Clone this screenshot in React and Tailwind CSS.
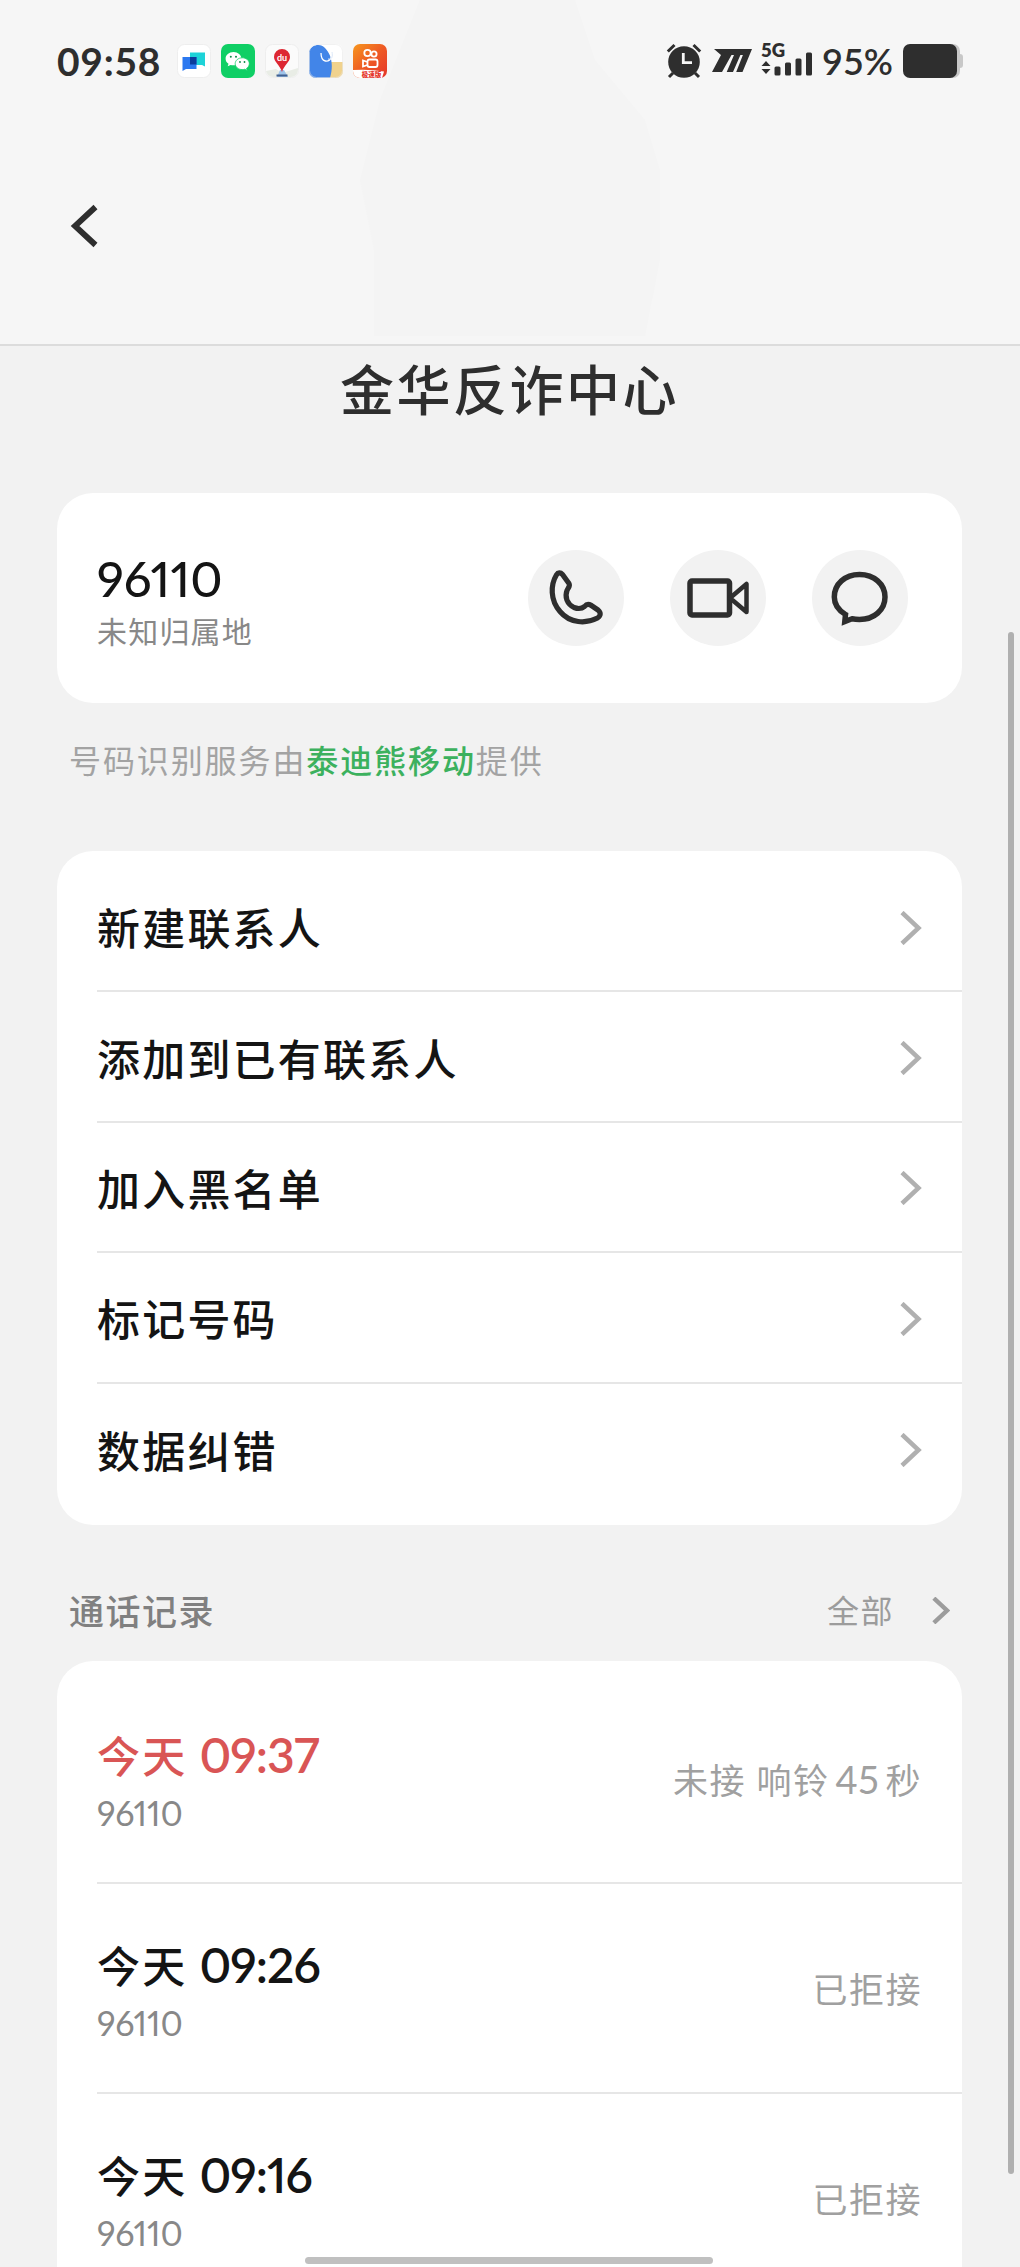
import React from 'react';

const actions = ['新建联系人', '添加到已有联系人', '加入黑名单', '标记号码', '数据纠错'];

const calls = [
  {time: '09:37', number: '96110', missed: true},
  {time: '09:26', number: '96110', missed: false},
  {time: '09:16', number: '96110', missed: false},
];

function Chevron({className, width}) {
  return (
    <svg className={className} viewBox="0 0 22 34" fill="none">
      <path d="M2 1.500 L18.500 17 L2 32.500" stroke="currentColor" strokeWidth={width} />
    </svg>
  );
}

function AppIcons() {
  return (
    <div className="flex gap-[10px]">
      <svg width="34" height="34" viewBox="0 0 34 34">
        <rect x="0.5" y="0.5" width="33" height="33" rx="7" fill="#fff" stroke="#eee" />
        <path d="M13 8.5h15v14l-3-1.500H13z" fill="#1dd3d8" />
        <path d="M5.500 13h14v12H9l-3.500 2z" fill="#2b78f0" />
        <path d="M13 13h6.500v7.500H13z" fill="#0b3c9c" />
      </svg>
      <svg width="34" height="34" viewBox="0 0 34 34">
        <rect width="34" height="34" rx="7" fill="#0fcf65" />
        <path d="M12.500 8C8 8 4.600 11 4.600 14.700c0 2.100 1.100 3.900 2.900 5.100l-.8 2.500 2.900-1.400c.9.300 1.900.4 2.900.4 4.400 0 8-3 8-6.600S16.900 8 12.500 8z" fill="#fff" />
        <path d="M21.300 13.800c-4 0-7.100 2.600-7.100 5.900s3.100 5.900 7.100 5.900c.9 0 1.700-.1 2.500-.4l2.400 1.300-.6-2.200c1.700-1.100 2.700-2.700 2.700-4.600 0-3.300-3.100-5.900-7-5.900z" fill="#fff" stroke="#0fcf65" strokeWidth="0.8" />
        <circle cx="9.800" cy="12.800" r="1" fill="#0a8a45" />
        <circle cx="15" cy="12.800" r="1" fill="#0a8a45" />
        <circle cx="19" cy="18" r="0.900" fill="#0a8a45" />
        <circle cx="23.500" cy="18" r="0.900" fill="#0a8a45" />
      </svg>
      <svg width="34" height="34" viewBox="0 0 34 34">
        <rect x="0.500" y="0.500" width="33" height="33" rx="7" fill="#fbfbfb" stroke="#eee" />
        <path d="M1 27l10-2 6 4 16-5v2a7 7 0 0 1-7 7H8a7 7 0 0 1-7-6z" fill="#e9ede6" />
        <path d="M12 33l3-7h4l4 7z" fill="#9fc4ea" />
        <path d="M17 5a8 8 0 0 0-8 8c0 5 6 8 8 15 2-7 8-10 8-15a8 8 0 0 0-8-8z" fill="#dd2732" />
        <text x="17" y="16.500" textAnchor="middle" fontSize="9" fontWeight="700" fill="#fff" className="font-['Lato']">du</text>
        <rect x="11.500" y="30.500" width="11" height="2" fill="#41608f" />
      </svg>
      <svg width="34" height="34" viewBox="0 0 34 34">
        <clipPath id="tile"><rect width="34" height="34" rx="7" /></clipPath>
        <g clipPath="url(#tile)">
          <rect width="34" height="34" fill="#fff" />
          <path d="M20 18h14v16H18z" fill="#f0d28d" />
          <path d="M0 7C3 0 12-1 16 4c6 6 9 16 5 30H0z" fill="#4285e8" />
          <path d="M12 9c0 10 8 10 10.500 4" fill="none" stroke="#fff" strokeWidth="1.300" />
          <path d="M19 15c4 1 5-3 4-7" fill="none" stroke="#dce8f8" strokeWidth="1" />
        </g>
        <rect x="0.500" y="0.500" width="33" height="33" rx="7" fill="none" stroke="#e8e8e8" strokeOpacity="0.600" />
      </svg>
      <svg width="34" height="34" viewBox="0 0 34 34">
        <defs>
          <linearGradient id="warm" x1="0" y1="0" x2="1" y2="1">
            <stop offset="0" stopColor="#f7971e" />
            <stop offset="0.500" stopColor="#ee5a24" />
            <stop offset="1" stopColor="#e5352b" />
          </linearGradient>
        </defs>
        <rect width="34" height="34" rx="7" fill="url(#warm)" />
        <g fill="none" stroke="#fff" strokeWidth="1.800">
          <circle cx="14.500" cy="9" r="3.200" />
          <circle cx="21" cy="10" r="2.600" />
          <rect x="14.500" y="15.500" width="10" height="7.500" rx="2" />
          <path d="M14.500 18l-4.500-1.500v6l4.500-1.500" />
        </g>
        <path d="M0 26q17-1 31 1.500L29 34H7a7 7 0 0 1-7-7z" fill="#fff" />
        <text x="18.500" y="32.500" textAnchor="middle" fontSize="6.500" fontWeight="900" fill="#e5352b" className="font-['Noto_Sans_CJK_SC']">极速版</text>
      </svg>
    </div>
  );
}

function StatusIcons() {
  return (
    <div className="flex items-center text-[#2e2e2e]">
      <svg width="36" height="36" viewBox="0 0 36 36" fill="none" stroke="currentColor">
        <circle cx="18" cy="19" r="15.800" fill="currentColor" stroke="none" />
        <path d="M1.800 8.500L8.500 2M27.500 2l6.700 6.500" strokeWidth="3" />
        <path d="M7 30l-4 4M29 30l4 4" strokeWidth="3" />
        <path d="M17.300 10v9.700H26" stroke="#f6f6f6" strokeWidth="2.800" />
      </svg>
      <svg className="ml-[10px]" width="40" height="24" viewBox="0 0 40 24" fill="currentColor">
        <path d="M2 0h38l-9.500 23h-6.300l6.700-17h-2.500L21 23h-6.300l7.300-17h-2.500L10 23H0L9 6z" />
      </svg>
      <div className="ml-[9px] flex h-[36px] w-[52px] flex-col justify-between">
        <span className="h-[14px] text-[18.500px] font-extrabold leading-[14px] font-['Lato']">5G</span>
        <svg className="-mt-1 overflow-visible" width="52" height="26" viewBox="0 0 52 26" fill="currentColor">
          <path d="M0.500 13l4.500-5 4.500 5zM0.500 16l4.500 5 4.500-5z" />
          <rect x="13.500" y="13.500" width="6" height="9" rx="1.500" />
          <rect x="24" y="9.500" width="6" height="13" rx="1.500" />
          <rect x="34.500" y="5.500" width="6" height="17" rx="1.500" />
          <rect x="45" y="-0.500" width="6" height="23" rx="1.500" />
        </svg>
      </div>
      <span className="ml-[9px] w-[72px] text-[36px] font-semibold leading-none font-['Lato']">95%</span>
      <svg className="ml-[9px]" width="60" height="34" viewBox="0 0 60 34">
        <rect x="30" y="0" width="27" height="34" rx="7" fill="#c8c8c8" />
        <rect x="54" y="10" width="6" height="14" rx="3" fill="#c8c8c8" />
        <rect width="54" height="34" rx="7" fill="currentColor" />
      </svg>
    </div>
  );
}

function RoundButton({children}) {
  return (
    <button className="flex h-24 w-24 items-center justify-center rounded-full bg-[#f2f2f2] text-[#2e2e2e]">
      {children}
    </button>
  );
}

export default function App() {
  return (
    <div className="relative flex h-[2267px] w-[1020px] flex-col overflow-hidden bg-[#f2f2f2] font-['Lato','Noto_Sans_CJK_SC',sans-serif] text-[#141414]">
      <header className="relative h-[346px] shrink-0 border-b-2 border-[#dcdcdc] bg-[#f6f6f6]">
        <svg className="absolute left-[360px] top-0" width="304" height="336" viewBox="0 0 304 336" fill="#f4f4f4">
          <path d="M60 0h155l20 60 50 60 15 50v90l-15 76H14V250L0 180l20-80z" />
        </svg>
        <div className="relative flex h-[122px] items-center justify-between pl-[57px] pr-[57px]">
          <div className="flex items-center">
            <span className="w-[120px] text-[39px] font-bold leading-none tracking-[0.700px] text-[#2e2e2e]">09:58</span>
            <AppIcons />
          </div>
          <StatusIcons />
        </div>
        <svg className="relative ml-[70px] mt-[81px]" width="30" height="46" viewBox="0 0 30 46" fill="none">
          <path d="M25.500 4L5 23l20.500 19" stroke="#2e2e2e" strokeWidth="5.800" />
        </svg>
      </header>

      <main className="flex flex-col pl-[57px] pr-[58px]">
        <h1 className="mt-[5px] h-[80px] text-center text-[54px] font-medium leading-[80px] tracking-[2.500px] text-[#2e2e2e]">
          金华反诈中心
        </h1>

        <section className="mt-[62px] flex h-[210px] items-center justify-between rounded-[36px] bg-white pl-10 pr-[54px]">
          <div className="pt-[7px]">
            <p className="text-[49px] font-medium leading-[58px] tracking-[0.300px] proportional-nums">96110</p>
            <p className="text-[30px] leading-[48px] tracking-[1.200px] text-[#888]">未知归属地</p>
          </div>
          <div className="flex gap-[46px]">
            <RoundButton>
              <svg width="60" height="60" viewBox="0 0 60 60" fill="none" stroke="currentColor" strokeWidth="5.200" strokeLinejoin="round">
                <path d="M10.500 6.800C12 4.300 14.500 4.300 16.500 6.500L23 15.500C24.500 18 22 20 21 22.500C18.500 29 21 36 28 39.500C32 41 35.500 41 38.500 38.500C40.500 36 43 36 45 37.300L52 42C55 44.500 55 47.500 51.500 50C40 56 24 55.500 14 43.500C4 32 4.500 17 10.500 6.800Z" />
              </svg>
            </RoundButton>
            <RoundButton>
              <svg width="64" height="44" viewBox="0 0 64 44" fill="none" stroke="currentColor" strokeWidth="5.500" strokeLinejoin="round">
                <rect x="4" y="5" width="39.500" height="34" rx="2" />
                <path d="M44 22L60.500 8v28z" strokeWidth="4.500" />
              </svg>
            </RoundButton>
            <RoundButton>
              <svg width="60" height="56" viewBox="0 0 60 56" fill="none" stroke="currentColor" strokeWidth="5.500">
                <path d="M15.500 44.500C8 40 4.300 34 4.300 27C4.300 14 15 4.500 29.500 4.500S55 14 55 27S44 49.500 29.500 49.500C26.500 49.500 24.500 49.300 22 48.800L14.800 51.500Z" />
              </svg>
            </RoundButton>
          </div>
        </section>

        <p className="mt-[32px] h-[52px] pl-3 text-[32px] leading-[52px] tracking-[1.900px] text-[#a3a3a3]">
          号码识别服务由<span className="font-medium text-[#3cb15e]">泰迪熊移动</span>提供
        </p>

        <section className="mt-[64px] h-[674px] rounded-[36px] bg-white pl-10 pt-[11px]">
          {actions.map(action => (
            <div
              key={action}
              className="flex h-[130.400px] items-center justify-between border-b-2 border-[#e6e6e6] pr-[40px] last:border-b-0"
            >
              <span className="pt-[5px] text-[43px] font-medium leading-none tracking-[2.200px]">{action}</span>
              <Chevron className="mt-[3px] h-[34px] w-[22px] text-[#b0b0b0]" width={4.5} />
            </div>
          ))}
        </section>

        <div className="mt-[60px] flex h-[52px] items-center justify-between pl-3 pr-[12px]">
          <h2 className="text-[35px] font-medium leading-[52px] tracking-[1.500px] text-[#808080]">通话记录</h2>
          <div className="flex items-center text-[#9c9c9c]">
            <span className="mr-[38px] text-[32px] leading-[52px] tracking-[1.500px]">全部</span>
            <Chevron className="-mt-[2px] h-[27px] w-[18px]" width={5.5} />
          </div>
        </div>

        <section className="mt-[24px] h-[700px] shrink-0 rounded-t-[36px] bg-white pl-10 pt-[13px]">
          {calls.map(call => (
            <div
              key={call.time}
              className="flex h-[210px] items-center justify-between border-b-2 border-[#e6e6e6] pr-[40px]"
            >
              <div className="pt-[7px]">
                <p className={call.missed ? 'text-[#d95555]' : ''}>
                  <span className="text-[43px] font-medium leading-[60px] tracking-[2.200px]">今天</span>
                  <span className="ml-3 text-[48px] font-semibold leading-[60px] tracking-[-0.900px] proportional-nums">{call.time}</span>
                </p>
                <p className="text-[34px] leading-[52px] text-[#888] proportional-nums">{call.number}</p>
              </div>
              {call.missed ? (
                <span className="pt-[3px] text-[35px] tracking-[1.500px] text-[#a0a0a0]">
                  未接 响铃<span className="mx-[6px] text-[38px] tracking-normal">45</span>秒
                </span>
              ) : (
                <span className="pt-[2px] text-[35px] tracking-[1.500px] text-[#a0a0a0]">已拒接</span>
              )}
            </div>
          ))}
        </section>
      </main>

      <div className="absolute right-[6px] top-[632px] h-[1542px] w-[6px] rounded-full bg-[#b0b0b0]" />
      <div className="absolute bottom-[3px] left-[305px] h-[7px] w-[408px] rounded-full bg-[#c0c0c0]" />
    </div>
  );
}
